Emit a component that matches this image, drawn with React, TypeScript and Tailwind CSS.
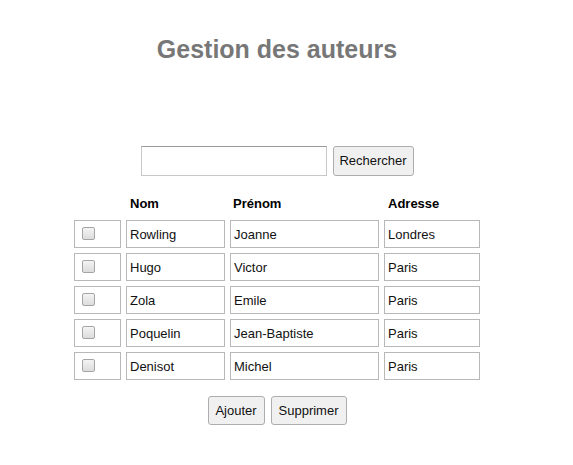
const auteurs = [
  { nom: "Rowling", prenom: "Joanne", adresse: "Londres" },
  { nom: "Hugo", prenom: "Victor", adresse: "Paris" },
  { nom: "Zola", prenom: "Emile", adresse: "Paris" },
  { nom: "Poquelin", prenom: "Jean-Baptiste", adresse: "Paris" },
  { nom: "Denisot", prenom: "Michel", adresse: "Paris" },
];

const cols = "grid grid-cols-[47px_99px_149px_96px] gap-x-[5px]";

const Cell = ({ children }: { children?: React.ReactNode }) => (
  <div className="h-[28px] border border-[#b8b8b8] bg-white pl-[3px] flex items-center text-[13px] text-[#111] leading-none">
    {children}
  </div>
);

const Button = ({ label, w }: { label: string; w: string }) => (
  <button
    className={`${w} h-[29px] rounded-[3px] border border-[#adadad] bg-[#f0f0f0] text-[13px] text-[#111] flex items-center justify-center`}
  >
    {label}
  </button>
);

export default function App() {
  return (
    <div className="w-[554px] min-h-[465px] bg-white font-['Liberation_Sans',Arial,sans-serif]">
      <h1 className="pt-[35px] text-center text-[25px] leading-[28px] font-bold text-[#777]">
        Gestion des auteurs
      </h1>

      <div className="mt-[83px] flex justify-center gap-[6px]">
        <input
          type="text"
          className="w-[186px] h-[30px] border border-[#c8c8c8] border-t-[#999] bg-white outline-none"
        />
        <button className="w-[81px] h-[30px] rounded-[3px] border border-[#adadad] bg-[#f0f0f0] text-[13px] text-[#111]">
          Rechercher
        </button>
      </div>

      <div className="mt-[20px] flex flex-col items-center">
        <div className={`${cols} h-[16px] text-[13px] leading-[16px] font-bold text-black`}>
          <div />
          <div className="pl-[4px]">Nom</div>
          <div className="pl-[3px]">Prénom</div>
          <div className="pl-[4px]">Adresse</div>
        </div>

        <div className="mt-[8px] flex flex-col gap-y-[5px]">
          {auteurs.map((a) => (
            <div key={a.nom} className={cols}>
              <div className="h-[28px] border border-[#b8b8b8] pl-[7px] pt-[6px]">
                <span className="block w-[13px] h-[13px] rounded-[2px] border border-[#a5a5a5] bg-gradient-to-b from-[#f4f4f4] to-[#dcdcdc]" />
              </div>
              <Cell>{a.nom}</Cell>
              <Cell>{a.prenom}</Cell>
              <Cell>{a.adresse}</Cell>
            </div>
          ))}
        </div>

        <div className="mt-[16px] flex gap-[6px]">
          <Button label="Ajouter" w="w-[57px]" />
          <Button label="Supprimer" w="w-[76px]" />
        </div>
      </div>
    </div>
  );
}
